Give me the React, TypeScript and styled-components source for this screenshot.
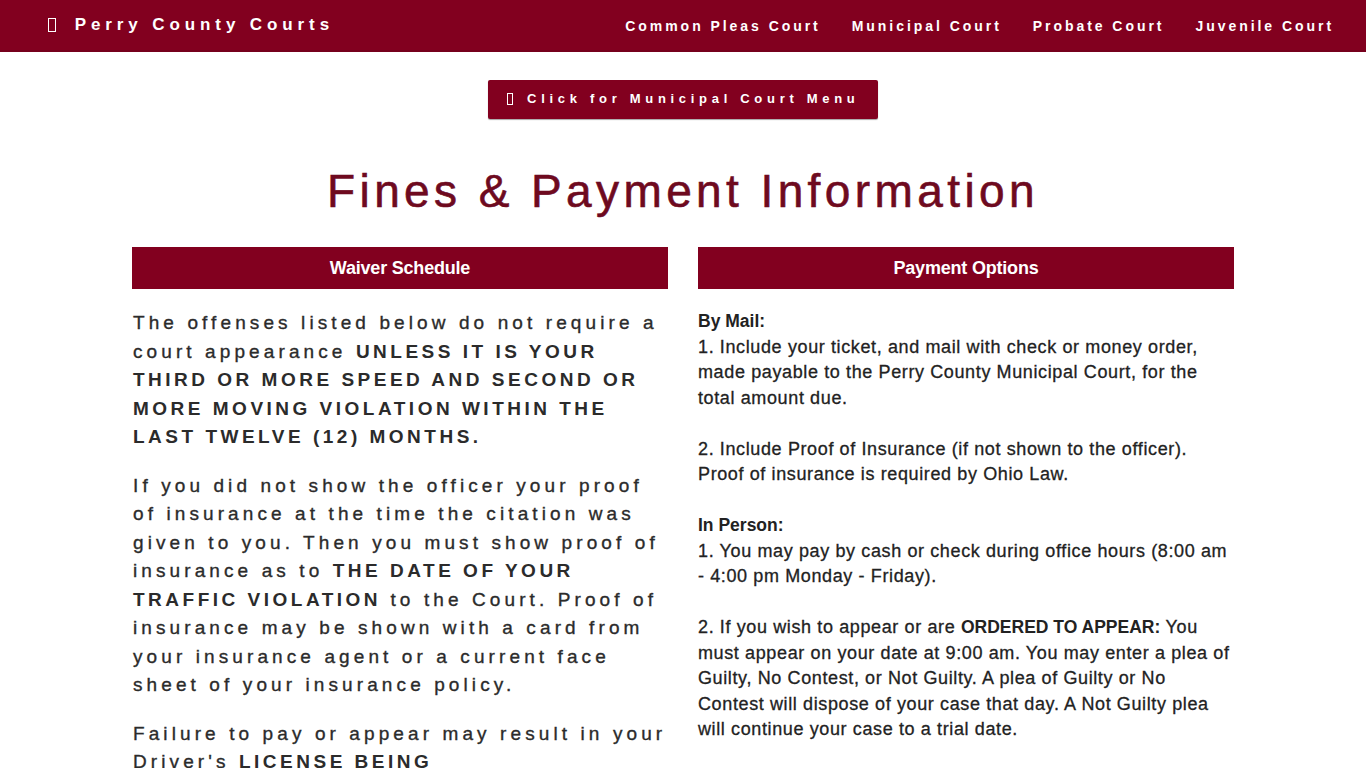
import React from "react";
import styled, { createGlobalStyle } from "styled-components";

const GlobalStyle = createGlobalStyle`
  html, body { margin: 0; padding: 0; background: #ffffff; }
  body { font-family: "Liberation Sans", Arial, sans-serif; }
  * { box-sizing: border-box; }
`;

const MAROON = "#82001f";

const TopBar = styled.header`
  height: 52px;
  background: ${MAROON};
  border-bottom: 2px solid #76001c;
  display: flex;
  align-items: center;
  justify-content: space-between;
  padding: 0 32px 0 48px;
`;

const Brand = styled.a`
  display: flex;
  align-items: center;
  gap: 19px;
  color: #fff;
  font-weight: 700;
  font-size: 17px;
  letter-spacing: 4.9px;
  text-decoration: none;
`;

const Tofu = styled.span<{ $size: number }>`
  display: inline-block;
  width: ${(p) => p.$size * 0.55}px;
  height: ${(p) => p.$size}px;
  border: 1px solid #fff;
  flex: none;
`;

const Nav = styled.nav`
  display: flex;
  gap: 31px;
`;

const NavLink = styled.a`
  color: #fff;
  font-weight: 700;
  font-size: 14px;
  letter-spacing: 2.95px;
  text-decoration: none;
  margin-top: 2px;
`;

const Main = styled.main`
  width: 1102px;
  margin: 0 auto;
  display: flex;
  flex-direction: column;
  align-items: center;
`;

const MenuButton = styled.button`
  margin-top: 28px;
  width: 390px;
  height: 39px;
  background: ${MAROON};
  border: none;
  border-radius: 2px;
  box-shadow: 0 1px 1px rgba(0, 0, 0, 0.35);
  color: #fff;
  font-family: "Liberation Sans", Arial, sans-serif;
  font-weight: 700;
  font-size: 13px;
  letter-spacing: 4.7px;
  display: flex;
  align-items: center;
  justify-content: center;
  gap: 14px;
  padding: 0 0 2px;
`;

const Title = styled.h1`
  margin: 46px 0 30px;
  font-weight: 400;
  font-size: 46px;
  line-height: 52px;
  letter-spacing: 4.4px;
  color: #6e0a1f;
  -webkit-text-stroke: 0.6px #6e0a1f;
`;

const Columns = styled.div`
  width: 100%;
  display: grid;
  grid-template-columns: 1fr 1fr;
  gap: 30px;
`;

const Column = styled.section``;

const SectionHead = styled.h2`
  margin: 0;
  height: 42px;
  background: ${MAROON};
  color: #fff;
  font-size: 18px;
  font-weight: 700;
  display: flex;
  align-items: center;
  justify-content: center;
  letter-spacing: -0.2px;
`;

const WaiverBody = styled.div`
  padding: 20px 0 0 1px;
`;

const WaiverPara = styled.p`
  margin: 0 0 20px;
  font-size: 19px;
  line-height: 28.5px;
  letter-spacing: 4.1px;
  color: #2b2b2b;
  -webkit-text-stroke: 0.35px #2b2b2b;
`;

const Caps = styled.strong`
  font-weight: 700;
  letter-spacing: 3.5px;
  -webkit-text-stroke: 0;
`;

const Strong = styled.strong`
  font-weight: 700;
  font-size: 17.5px;
  letter-spacing: 0;
  -webkit-text-stroke: 0;
`;

const PayBody = styled.div`
  padding: 20px 0 0;
  font-size: 18px;
  line-height: 25.5px;
  letter-spacing: 0.62px;
  color: #222;
  -webkit-text-stroke: 0.3px #222;
`;

export default function App() {
  return (
    <>
      <GlobalStyle />
      <TopBar>
        <Brand href="#">
          <Tofu $size={14} />
          Perry County Courts
        </Brand>
        <Nav>
          <NavLink href="#">Common Pleas Court</NavLink>
          <NavLink href="#">Municipal Court</NavLink>
          <NavLink href="#">Probate Court</NavLink>
          <NavLink href="#">Juvenile Court</NavLink>
        </Nav>
      </TopBar>
      <Main>
        <MenuButton>
          <Tofu $size={12} />
          Click for Municipal Court Menu
        </MenuButton>
        <Title>Fines &amp; Payment Information</Title>
        <Columns>
          <Column>
            <SectionHead>Waiver Schedule</SectionHead>
            <WaiverBody>
              <WaiverPara>
                The offenses listed below do not require a court appearance{" "}
                <Caps>UNLESS IT IS YOUR THIRD OR MORE SPEED AND SECOND OR MORE MOVING VIOLATION WITHIN THE LAST TWELVE (12) MONTHS.</Caps>
              </WaiverPara>
              <WaiverPara>
                If you did not show the officer your proof of insurance at the time the citation was given to you. Then you must show proof of insurance as to{" "}
                <Caps>THE DATE OF YOUR TRAFFIC VIOLATION</Caps> to the Court. Proof of insurance may be shown with a card from your insurance agent or a current face sheet of your insurance policy.
              </WaiverPara>
              <WaiverPara>
                Failure to pay or appear may result in your Driver's <Caps>LICENSE BEING<br />SUSPENDED</Caps> and a warrant being issued for your arrest.
              </WaiverPara>
            </WaiverBody>
          </Column>
          <Column>
            <SectionHead>Payment Options</SectionHead>
            <PayBody>
              <Strong>By Mail:</Strong>
              <br />
              1. Include your ticket, and mail with check or money order, made payable to the Perry County Municipal Court, for the total amount due.
              <br />
              <br />
              2. Include Proof of Insurance (if not shown to the officer). Proof of insurance is required by Ohio Law.
              <br />
              <br />
              <Strong>In Person:</Strong>
              <br />
              1. You may pay by cash or check during office hours (8:00 am - 4:00 pm Monday - Friday).
              <br />
              <br />
              2. If you wish to appear or are <Strong>ORDERED TO APPEAR:</Strong> You must appear on your date at 9:00 am. You may enter a plea of Guilty, No Contest, or Not Guilty. A plea of Guilty or No Contest will dispose of your case that day. A Not Guilty plea will continue your case to a trial date.
              <br />
              <br />
              <Strong>Online:</Strong>
              <br />
              You may pay online with a credit or debit card.
            </PayBody>
          </Column>
        </Columns>
      </Main>
    </>
  );
}
